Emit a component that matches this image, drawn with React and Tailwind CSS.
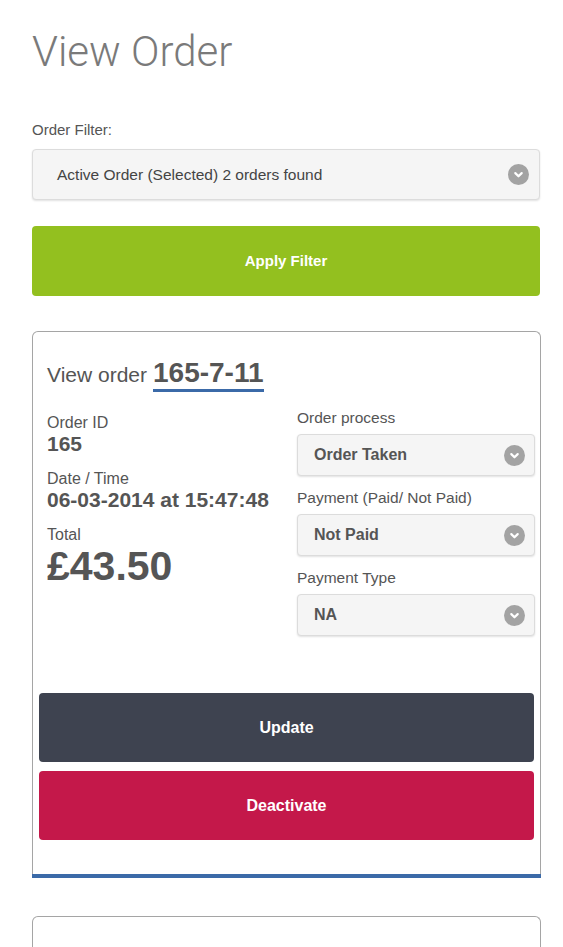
const SANS = "font-['Liberation_Sans','Helvetica_Neue',Arial,sans-serif]";

function Chevron() {
  return (
    <span className="flex h-[21px] w-[21px] items-center justify-center rounded-full bg-[#a3a3a3]">
      <svg width="11" height="11" viewBox="0 0 12 12" fill="none">
        <path d="M2.5 4.5 L6 8 L9.5 4.5" stroke="#fff" strokeWidth="2.4" strokeLinecap="round" strokeLinejoin="round" />
      </svg>
    </span>
  );
}

function Select({ value, bold, tall }) {
  return (
    <div
      className={`flex items-center justify-between rounded-[4px] border border-[#dcdcdc] bg-[#f5f5f5] shadow-[0_1px_2px_rgba(0,0,0,0.12)] ${
        tall ? "h-[51px] pl-[24px] pr-[10px]" : "h-[42px] pl-[16px] pr-[9px]"
      }`}
    >
      <span className={bold ? "text-[16px] font-bold text-[#555]" : "text-[15.5px] text-[#444]"}>{value}</span>
      <Chevron />
    </div>
  );
}

function OrderCard({ code, id, date, total }) {
  return (
    <div className="rounded-t-[6px] border border-b-0 border-[#a5a5a5] bg-white">
      <div className="px-[14px] pt-[27px]">
        <div className="flex items-baseline gap-[6px]">
          <span className="text-[21px] leading-none text-[#555]">View order</span>
          <span className="border-b-[3px] border-[#3b6aa8] pb-[2px] text-[28px] font-bold leading-none text-[#555]">
            {code}
          </span>
        </div>
      </div>
      <div className="flex pl-[14px] pr-[5px] pt-[17px]">
        <div className="w-[250px] pt-[5px] text-[#555]">
          <div className="text-[16px] leading-[18px]">Order ID</div>
          <div className="text-[21px] font-bold leading-[24px]">{id}</div>
          <div className="mt-[14px] text-[16px] leading-[18px]">Date / Time</div>
          <div className="text-[21px] font-bold leading-[24px]">{date}</div>
          <div className="mt-[14px] text-[16px] leading-[18px]">Total</div>
          <div className="text-[41px] font-bold leading-[44px]">{total}</div>
        </div>
        <div className="flex flex-1 flex-col">
          <div className="text-[15.5px] leading-[18px] text-[#555]">Order process</div>
          <div className="mt-[7px]">
            <Select value="Order Taken" bold />
          </div>
          <div className="mt-[13px] text-[15.5px] leading-[18px] text-[#555]">Payment (Paid/ Not Paid)</div>
          <div className="mt-[7px]">
            <Select value="Not Paid" bold />
          </div>
          <div className="mt-[13px] text-[15.5px] leading-[18px] text-[#555]">Payment Type</div>
          <div className="mt-[7px]">
            <Select value="NA" bold />
          </div>
        </div>
      </div>
      <div className="flex flex-col gap-[9px] px-[6px] pt-[57px]">
        <button className="flex h-[69px] items-center justify-center rounded-[4px] bg-[#3e4350] text-[16px] font-bold text-white">
          Update
        </button>
        <button className="flex h-[69px] items-center justify-center rounded-[4px] bg-[#c4184a] text-[16px] font-bold text-white">
          Deactivate
        </button>
      </div>
      <div className="h-[34px]" />
      <div className="-mx-px h-[4px] bg-[#3b6aa8]" />
    </div>
  );
}

export default function App() {
  return (
    <div className={`${SANS} min-h-screen bg-white`}>
      <div className="ml-[32px] w-[509px] pt-[28px]">
        <h1 className="font-['Roboto',sans-serif] text-[42px] font-light leading-[48px] text-[#7a7a7a]">View Order</h1>

        <div className="mt-[46px] text-[15px] leading-[16px] text-[#555]">Order Filter:</div>
        <div className="mt-[11px] w-[508px]">
          <Select value="Active Order (Selected) 2 orders found" tall />
        </div>

        <button className="mt-[26px] flex h-[70px] w-[508px] items-center justify-center rounded-[4px] bg-[#93c01f] text-[15px] font-bold text-white">
          Apply Filter
        </button>

        <div className="mt-[35px] flex flex-col gap-[38px]">
          <OrderCard code="165-7-11" id="165" date="06-03-2014 at 15:47:48" total="£43.50" />
          <OrderCard code="166-7-11" id="166" date="06-03-2014 at 16:02:11" total="£21.00" />
        </div>
      </div>
    </div>
  );
}
